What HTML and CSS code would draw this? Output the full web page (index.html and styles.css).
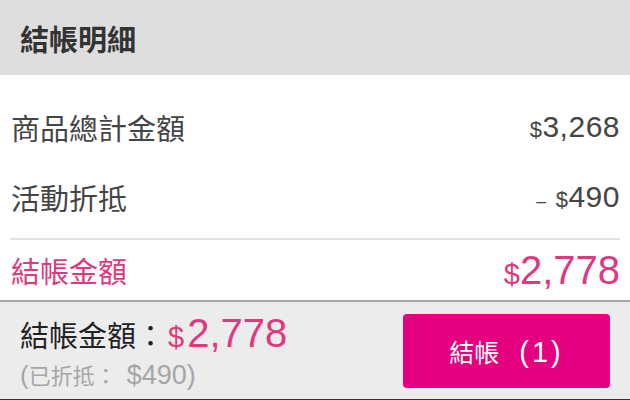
FILE: index.html
```html
<!DOCTYPE html>
<html lang="zh-Hant">
<head>
    <meta charset="UTF-8">
    <title>結帳明細</title>
    <link rel="stylesheet" href="styles.css">
</head>
<body>

<div class="page">
    <div class="header">結帳明細</div>

    <div class="detail">
        <div class="row">
            <span class="label">商品總計金額</span>
            <span class="amount"><span class="cur">$</span>3,268</span>
        </div>
        <div class="row">
            <span class="label">活動折抵</span>
            <span class="amount"><span class="minus">–</span> <span class="cur">$</span>490</span>
        </div>
        <div class="row total">
            <span class="label">結帳金額</span>
            <span class="amount"><span class="cur">$</span>2,778</span>
        </div>
    </div>

    <!-- 底部結帳列 -->
    <div class="footer">
        <div class="summary">
            <div class="sum-line">結帳金額：<span class="sum-price"><span class="cur">$</span>2,778</span></div>
            <div class="sum-note"><span class="paren">(</span>已折抵：<span class="num">$490)</span></div>
        </div>
        <button class="checkout">結帳<span class="count">(1)</span></button>
    </div>
</div>

</body>
</html>
```

FILE: styles.css
```css
body {
    margin: 0;
    padding: 0;
    background-color: #ffffff;
    font-family: 'Liberation Sans', 'Noto Sans CJK TC', sans-serif;
    overflow: hidden;
}

.page {
    width: 630px;
    height: 400px;
    display: flex;
    flex-direction: column;
}

.header {
    height: 75px;
    background-color: #dedede;
    display: flex;
    align-items: center;
    padding-left: 20px;
    font-family: 'Noto Sans CJK TC', sans-serif;
    font-size: 29px;
    font-weight: bold;
    color: #333333;
}

.detail {
    padding: 17px 10px 0 10px;
    flex: 1;
}

.row {
    height: 70px;
    display: flex;
    align-items: center;
    justify-content: space-between;
    color: #454545;
}

.label {
    font-family: 'Noto Sans CJK TC', sans-serif;
    font-size: 29px;
    padding-left: 1px;
}

.amount {
    font-size: 30px;
    letter-spacing: 0.5px;
}

.cur {
    font-size: 22px;
}

.minus {
    font-size: 18px;
}

/* 分隔線下的總額 */
.row.total {
    margin-top: 6px;
    border-top: 2px solid #e2e2e2;
    height: 60px;
    color: #e0387d;
}

.row.total .amount {
    font-size: 40px;
    letter-spacing: 0;
}

.row.total .cur {
    font-size: 29px;
}

.footer {
    height: 97px;
    background-color: #ececec;
    border-top: 2px solid #a8a8a8;
    border-bottom: 1px solid #333333;
    display: flex;
    align-items: center;
    justify-content: space-between;
    padding: 0 20px;
}

.summary {
    display: flex;
    flex-direction: column;
    gap: 2px;
}

.sum-line {
    font-family: 'Noto Sans CJK TC', sans-serif;
    font-size: 29px;
    color: #222222;
    display: flex;
    align-items: baseline;
}

.sum-price {
    font-family: 'Liberation Sans', sans-serif;
    font-size: 40px;
    color: #e0387d;
    margin-left: 3px;
}

.sum-price .cur {
    font-size: 29px;
    margin-right: 3px;
}

.sum-note {
    font-size: 22px;
    color: #a6a6a6;
}

.sum-note .paren {
    font-size: 26px;
}

.sum-note .num {
    font-size: 27px;
    margin-left: 10px;
}

.checkout {
    width: 207px;
    height: 74px;
    border: none;
    border-radius: 4px;
    background-color: #e4007f;
    color: #ffffff;
    font-family: 'Noto Sans CJK TC', sans-serif;
    font-size: 25px;
}

.checkout .count {
    font-family: 'Liberation Sans', sans-serif;
    font-size: 29px;
    letter-spacing: 3px;
    margin-left: 20px;
}
```
